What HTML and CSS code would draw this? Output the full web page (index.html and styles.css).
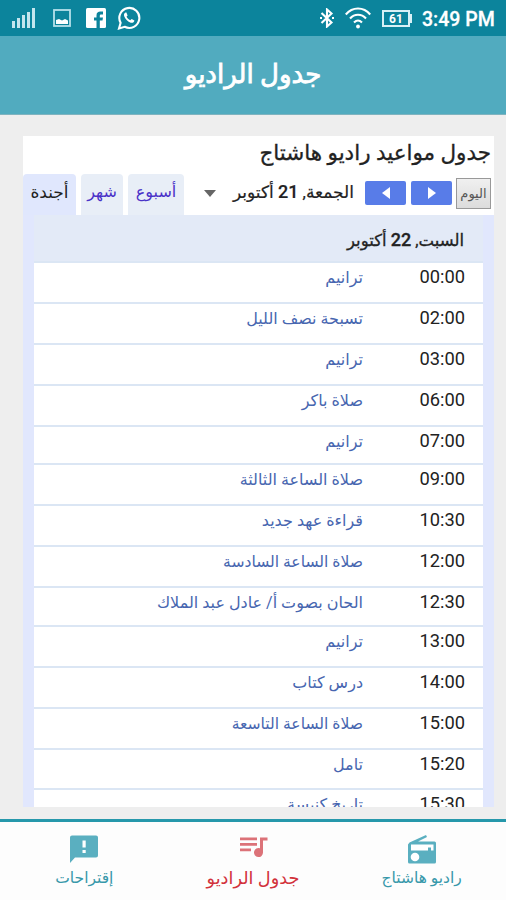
FILE: index.html
```html
<!DOCTYPE html>
<html lang="ar" dir="rtl">
<head>
    <meta charset="UTF-8">
    <meta name="viewport" content="width=device-width, initial-scale=1.0">
    <title>جدول الراديو</title>
    <link rel="stylesheet" href="styles.css">
</head>
<body>
    <div class="status-bar" dir="ltr">
        <svg class="signal" width="24" height="21" viewBox="0 0 24 21" fill="#c4e6ee">
            <rect x="0" y="13" width="3" height="7"/>
            <rect x="5" y="10" width="3" height="10"/>
            <rect x="10" y="7" width="3" height="13"/>
            <rect x="15" y="4" width="3" height="16"/>
            <rect x="20" y="0" width="3" height="20"/>
        </svg>
        <svg class="picture" width="18" height="18" viewBox="0 0 18 18">
            <rect x="1" y="1" width="16" height="16" fill="none" stroke="#b5e0ea" stroke-width="1.8"/>
            <path d="M3 11l3-1 3 1.500 3-1.500 3 1.500v3.500H3z" fill="#fff"/>
        </svg>
        <svg class="facebook" width="20" height="20" viewBox="0 0 20 20">
            <rect width="20" height="20" rx="1.5" fill="#fff"/>
            <path d="M10.500 20v-7.500H8V9.500h2.500V7.500c0-3 1.500-4 4-4H17v3h-1.500c-1.300 0-1.700.4-1.700 1.500v1.500H17l-.5 3h-2.700V20z" fill="#0c849c"/>
        </svg>
        <svg class="whatsapp" width="24" height="24" viewBox="0 0 24 24">
            <path d="M2 22.500l1.600-5.700A10 10 0 1 1 7.700 20.800z" fill="none" stroke="#fff" stroke-width="2.1"/>
            <path d="M8.500 6.500c-1.500.7-1.900 2.200-1.200 4 1.200 3 3.500 5.200 6.500 6.200 1.800.5 3.400-.4 3.600-2.300l-2.700-1.500-1.500 1.400c-1.700-.8-2.900-2-3.700-3.500l1.100-1.400-1.200-2.900z" fill="#fff"/>
        </svg>
        <svg class="bluetooth" width="14" height="20" viewBox="0 0 14 20" fill="none" stroke="#fff" stroke-width="2.1">
            <path d="M1.500 5l10 9.500L7 18.500v-17l4.500 4L1.500 15"/>
            <path d="M0 10h2M12 10h2"/>
        </svg>
        <svg class="wifi" width="26" height="22" viewBox="0 0 26 22" fill="none" stroke="#fff" stroke-width="2.1">
            <path d="M.8 7.500C7.500-.5 18.500-.5 25.200 7.500"/>
            <path d="M5 11.500c4.500-5 11.500-5 16 0"/>
            <path d="M9 15.500c2.500-2.500 5.500-2.500 8 0"/>
            <circle cx="13" cy="19.5" r="1.9" fill="#fff" stroke="none"/>
        </svg>
        <div class="battery">61</div>
        <div class="clock">3:49 PM</div>
    </div>

    <div class="title-bar">جدول الراديو</div>

    <div class="content">
        <div class="calendar">
            <div class="calendar-title">جدول مواعيد راديو هاشتاج</div>
            <div class="calendar-nav">
                <button class="today">اليوم</button>
                <button class="nav-button prev"><svg width="8" height="12" viewBox="0 0 8 12"><path d="M0 0l8 6-8 6z" fill="#fff"/></svg></button>
                <button class="nav-button"><svg width="8" height="12" viewBox="0 0 8 12"><path d="M8 0L0 6l8 6z" fill="#fff"/></svg></button>
                <span class="date">الجمعة, <b>21</b> أكتوبر</span>
                <span class="dropdown"></span>
                <div class="tabs">
                    <a class="tab week">أسبوع</a>
                    <a class="tab month">شهر</a>
                    <a class="tab agenda">أجندة</a>
                </div>
            </div>
            <div class="agenda-body">
                <div class="day"><span>السبت, <b>22</b> أكتوبر</span></div>
                <div class="events">
                    <div class="event"><span class="time">00:00</span><span class="name">ترانيم</span></div>
                    <div class="event"><span class="time">02:00</span><span class="name">تسبحة نصف الليل</span></div>
                    <div class="event"><span class="time">03:00</span><span class="name">ترانيم</span></div>
                    <div class="event"><span class="time">06:00</span><span class="name">صلاة باكر</span></div>
                    <div class="event short"><span class="time">07:00</span><span class="name">ترانيم</span></div>
                    <div class="event"><span class="time">09:00</span><span class="name">صلاة الساعة الثالثة</span></div>
                    <div class="event"><span class="time">10:30</span><span class="name">قراءة عهد جديد</span></div>
                    <div class="event"><span class="time">12:00</span><span class="name tight">صلاة الساعة السادسة</span></div>
                    <div class="event short"><span class="time">12:30</span><span class="name">الحان بصوت أ/ عادل عبد الملاك</span></div>
                    <div class="event"><span class="time">13:00</span><span class="name">ترانيم</span></div>
                    <div class="event"><span class="time">14:00</span><span class="name">درس كتاب</span></div>
                    <div class="event"><span class="time">15:00</span><span class="name tight">صلاة الساعة التاسعة</span></div>
                    <div class="event"><span class="time">15:20</span><span class="name">تامل</span></div>
                    <div class="event"><span class="time">15:30</span><span class="name">تاريخ كنيسة</span></div>
                </div>
            </div>
        </div>
    </div>

    <div class="bottom-nav">
        <div class="nav-item">
            <svg width="30" height="30" viewBox="0 0 30 30">
                <path d="M2.500 8.500L19 1l1 2-9 4.500h16.500q1.500 0 1.500 1.500v19q0 1.500-1.500 1.500h-25Q1 29.500 1 28V10.500z" fill="#5aafc0"/>
                <path d="M4 10.500h22.500v6H24v-3h-3v3H4z" fill="#fff"/>
                <circle cx="8" cy="23" r="4.3" fill="#fff"/>
            </svg>
            <span class="label">راديو هاشتاج</span>
        </div>
        <div class="nav-item active">
            <svg width="30" height="30" viewBox="0 0 30 30" fill="#dc7278">
                <path d="M2 3.500h17v2.700H2zM2 9h17v2.700H2zM2 14.500h11v2.700H2z"/>
                <path d="M22 3.500h7.500v3H25V18.500a4.500 4.500 0 1 1-3-4.200z"/>
            </svg>
            <span class="label">جدول الراديو</span>
        </div>
        <div class="nav-item">
            <svg width="30" height="30" viewBox="0 0 30 30">
                <path d="M3 1.500h24q2 0 2 2v18q0 2-2 2H6L1 29V3.500q0-2 2-2z" fill="#5aafc0"/>
                <path d="M13.500 6.500h3.200v7h-3.200zM13.500 16h3.200v3h-3.200z" fill="#fff"/>
            </svg>
            <span class="label">إقتراحات</span>
        </div>
    </div>
</body>
</html>
```
FILE: styles.css
```css
* {
    box-sizing: border-box;
}
body {
    margin: 0;
    width: 506px;
    height: 900px;
    overflow: hidden;
    display: flex;
    flex-direction: column;
    background-color: #eeeeee;
    font-family: Roboto, "DejaVu Sans", sans-serif;
    color: #222;
}
svg {
    display: block;
    flex: none;
}
.status-bar {
    height: 36px;
    flex: none;
    display: flex;
    align-items: center;
    padding-left: 12px;
    background-color: #0c849c;
    color: #fff;
}
.picture {
    margin-left: 17px;
}
.facebook {
    margin-left: 15px;
}
.whatsapp {
    margin-left: 11px;
}
.bluetooth {
    margin-left: 179px;
}
.wifi {
    margin-left: 11px;
}
.battery {
    position: relative;
    width: 28px;
    height: 17px;
    margin-left: 11px;
    border: 2px solid #d8f1f6;
    font-size: 12px;
    font-weight: bold;
    line-height: 14px;
    text-align: center;
}
.battery::after {
    content: "";
    position: absolute;
    right: -4px;
    top: 2px;
    width: 2px;
    height: 9px;
    background-color: #d8f1f6;
}
.clock {
    margin-left: 12px;
    padding-top: 2px;
    font-size: 19.5px;
    font-weight: 500;
    white-space: nowrap;
    -webkit-text-stroke: 0.3px #fff;
}
.title-bar {
    height: 79px;
    flex: none;
    background-color: #51abbf;
    border-bottom: 1px solid #7fb3bf;
    color: #fff;
    font-size: 26px;
    line-height: 77px;
    text-align: center;
    -webkit-text-stroke: 0.8px #fff;
}
.content {
    height: 704px;
    flex: none;
    padding: 21px 12px 12px 23px;
}
.calendar {
    height: 671px;
    display: flex;
    flex-direction: column;
    overflow: hidden;
    background-color: #fff;
}
.calendar-title {
    height: 38px;
    flex: none;
    padding-right: 3px;
    font-size: 21.5px;
    line-height: 34px;
    white-space: nowrap;
    -webkit-text-stroke: 0.3px #222;
}
.calendar-nav {
    height: 41px;
    flex: none;
    display: flex;
    align-items: flex-start;
    padding-right: 3px;
}
button {
    border: none;
    padding: 0;
    font-family: inherit;
}
.today {
    width: 35px;
    height: 31px;
    margin-top: 4px;
    border: 1px solid #999;
    background: linear-gradient(#f0f0f0, #dcdcdc);
    color: #555;
    font-size: 13px;
}
.nav-button {
    width: 41px;
    height: 24px;
    margin: 7px 5px 0 0;
    display: flex;
    align-items: center;
    justify-content: center;
    border-radius: 2px;
    background-color: #587ce8;
}
.nav-button.prev {
    margin-right: 4px;
}
.date {
    width: 123px;
    margin-right: 11px;
    font-size: 17px;
    line-height: 35px;
    white-space: nowrap;
    -webkit-text-stroke: 0.2px #222;
}
.date b,
.day b {
    font-size: 18px;
    font-weight: 500;
}
.dropdown {
    margin: 16px 15px 0 0;
    border: 6px solid transparent;
    border-top: 7px solid #666;
    border-bottom: none;
}
.tabs {
    display: flex;
    gap: 5px;
    margin-right: auto;
}
.tab {
    height: 41px;
    border-radius: 4px 4px 0 0;
    background-color: #e8eef7;
    color: #4a32c8;
    font-size: 16px;
    line-height: 36px;
    text-align: center;
    white-space: nowrap;
}
.week {
    width: 56px;
}
.month {
    width: 42px;
}
.agenda {
    width: 53px;
    background-color: #e0e7fd;
    color: #222;
    font-size: 17px;
}
.agenda-body {
    flex: 1;
    padding: 0 11px;
    background-color: #e1e7fd;
}
.day {
    height: 46px;
    padding-right: 19px;
    background-color: #e3eaf7;
    font-size: 16.5px;
    line-height: 50px;
    -webkit-text-stroke: 0.3px #222;
}
.day span {
    white-space: nowrap;
}
.event {
    height: 40.9px;
    display: flex;
    align-items: flex-start;
    padding-right: 18px;
    border-top: 2px solid #dbe6f4;
    background-color: #fff;
}
.event.short {
    height: 38.8px;
}
.time {
    width: 102px;
    font-size: 18.3px;
    line-height: 28px;
}
.name {
    color: #4766b0;
    font-size: 16px;
    line-height: 30px;
    white-space: nowrap;
}
.name.tight {
    font-size: 15.6px;
}
.bottom-nav {
    flex: 1;
    display: flex;
    border-top: 3px solid #2698ab;
    background-color: #fdfdfd;
}
.nav-item {
    flex: 1;
    display: flex;
    flex-direction: column;
    align-items: center;
    padding-top: 12px;
    color: #3798aa;
}
.label {
    font-size: 15.5px;
    line-height: 29px;
    white-space: nowrap;
}
.active {
    color: #d2313b;
}
.active .label {
    font-size: 17.7px;
}
```
